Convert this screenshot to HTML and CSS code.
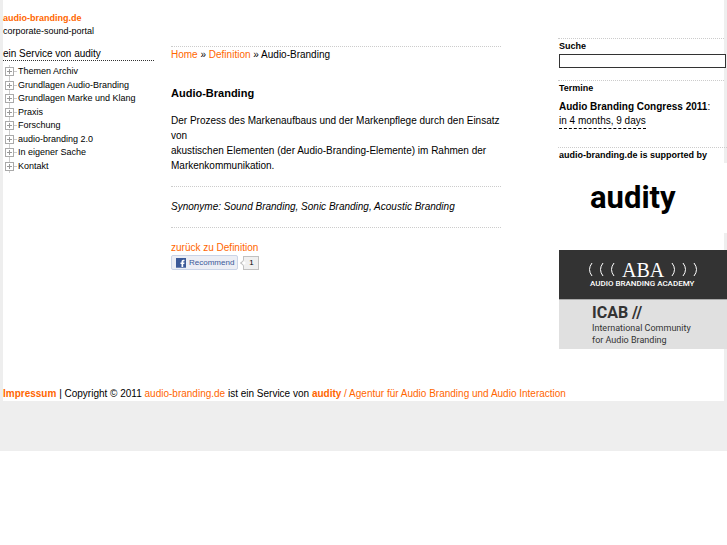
FILE: index.html
```html
<!DOCTYPE html>
<html lang="de">
<head>
<meta charset="UTF-8">
<meta name="viewport" content="width=device-width, initial-scale=1.0">
<title>Audio-Branding - audio-branding.de</title>
<link rel="stylesheet" href="styles.css">
</head>
<body>
<div class="wrapper">
  <div class="page">
    <div class="columns">

      <div class="left">
        <a class="logo" href="#">audio-branding.de</a>
        <div class="claim">corporate-sound-portal</div>
        <div class="service">ein Service von audity</div>
        <ul class="tree">
          <li><a href="#">Themen Archiv</a></li>
          <li><a href="#">Grundlagen Audio-Branding</a></li>
          <li><a href="#">Grundlagen Marke und Klang</a></li>
          <li><a href="#">Praxis</a></li>
          <li><a href="#">Forschung</a></li>
          <li><a href="#">audio-branding 2.0</a></li>
          <li><a href="#">In eigener Sache</a></li>
          <li><a href="#">Kontakt</a></li>
        </ul>
      </div>

      <div class="content">
        <div class="breadcrumb"><a href="#">Home</a> » <a href="#">Definition</a> » Audio-Branding</div>
        <h1>Audio-Branding</h1>
        <p class="text">Der Prozess des Markenaufbaus und der Markenpflege durch den Einsatz von<br>akustischen Elementen (der Audio-Branding-Elemente) im Rahmen der Markenkommunikation.</p>
        <p class="synonyms">Synonyme: Sound Branding, Sonic Branding, Acoustic Branding</p>
        <a class="back" href="#">zurück zu Definition</a>
        <div class="like">
          <button type="button" class="recommend">
            <svg width="10" height="10" viewBox="0 0 10 10" aria-hidden="true">
              <rect width="10" height="10" fill="#3b5998"/>
              <path d="M5.5 9V6H4.5V4.500H5.500V3.500Q5.500 1.800 7.200 1.800H8.500V3.200H7.700Q7.200 3.200 7.200 3.700V4.500H8.500L8.300 6H7.200V9Z" fill="#fff"/>
              <path d="M0 9.500H10" stroke="#6d84b4"/>
            </svg>
            Recommend
          </button>
          <span class="count">1</span>
        </div>
      </div>

      <div class="right">
        <form class="box search">
          <label for="search">Suche</label>
          <input type="text" id="search">
        </form>
        <div class="box dates">
          <h2>Termine</h2>
          <div><b>Audio Branding Congress 2011</b>:</div>
          <abbr>in 4 months, 9 days</abbr>
        </div>
        <div class="box support">
          <h2>audio-branding.de is supported by</h2>
          <a class="audity" href="#">audity</a>
          <a class="aba" href="#">
            <span class="aba-name">
              <svg width="28" height="18" viewBox="0 0 28 18" aria-hidden="true">
                <path d="M4 2Q-1 8.500 4 15M15 2Q10 8.500 15 15M26 2Q21 8.500 26 15"/>
              </svg>
              ABA
              <svg width="28" height="18" viewBox="0 0 28 18" aria-hidden="true">
                <path d="M2 2Q7 8.500 2 15M13 2Q18 8.500 13 15M24 2Q29 8.500 24 15"/>
              </svg>
            </span>
            <span class="aba-sub">AUDIO BRANDING ACADEMY</span>
          </a>
          <a class="icab" href="#">
            <b>ICAB //</b>
            <span>International Community<br>for Audio Branding</span>
          </a>
        </div>
      </div>

    </div>
    <div class="footer">
      <a href="#"><b>Impressum</b></a> | Copyright © 2011 <a href="#">audio-branding.de</a> ist ein Service von <a href="#"><b>audity</b> / Agentur für Audio Branding und Audio Interaction</a>
    </div>
  </div>
</div>
</body>
</html>
```
FILE: styles.css
```css
body {
  margin: 0;
  background: #fff;
  color: #000;
  font-family: "Liberation Sans", Arial, Helvetica, sans-serif;
  font-size: 10px;
  line-height: 15px;
}
a {
  color: #ff6600;
  text-decoration: none;
}
h1, h2, p, ul {
  margin: 0;
  padding: 0;
}
.wrapper {
  background: #eee;
  padding: 0 3px 50px;
}
.page {
  background: #fff;
}
.columns {
  display: grid;
  grid-template-columns: 151px 1fr 166px;
}

/* left column */
.left {
  padding-top: 12px;
  font-size: 9px;
  line-height: 13px;
}
.logo {
  display: block;
  font-weight: bold;
}
.service {
  margin-top: 9px;
  border-bottom: 1px dotted #333;
  font-size: 10px;
}
.tree {
  display: grid;
  grid-auto-rows: 1fr;
  height: 108px;
  margin-top: 4px;
  list-style: none;
}
.tree li {
  padding-left: 15px;
  background:
    linear-gradient(#999, #999) 4px 6px / 5px 1px no-repeat,
    linear-gradient(#999, #999) 6px 4px / 1px 5px no-repeat,
    linear-gradient(#fff, #fff) 3px 3px / 7px 7px no-repeat,
    linear-gradient(#aaa, #aaa) 2px 2px / 9px 9px no-repeat,
    linear-gradient(#ccc, #ccc) 11px 6px / 3px 1px no-repeat,
    linear-gradient(#ccc, #ccc) 6px 0 / 1px 100% no-repeat;
}
.tree a {
  color: #000;
}

/* content */
.content {
  padding: 46px 57px 0 17px;
}
.breadcrumb {
  border-top: 1px dotted #ccc;
}
h1 {
  margin-top: 24px;
  font-size: 11px;
  line-height: 15px;
}
.text {
  margin-top: 12px;
  padding-bottom: 13px;
  border-bottom: 1px dotted #ccc;
}
.synonyms {
  padding: 12px 0 13px;
  border-bottom: 1px dotted #ccc;
  font-style: italic;
}
.back {
  display: block;
  margin-top: 12px;
}
.like {
  display: flex;
  align-items: center;
  gap: 5px;
}
.recommend {
  display: flex;
  align-items: center;
  gap: 3px;
  height: 15px;
  padding: 0 3px 0 4px;
  border: 1px solid #cad4e7;
  border-radius: 2px;
  background: #eceef5;
  color: #3b5998;
  font: 8px "Liberation Sans", Arial, sans-serif;
}
.count {
  position: relative;
  box-sizing: border-box;
  width: 16px;
  height: 14px;
  border: 1px solid #c1c1c1;
  background: #f0f0f0;
  font-size: 8px;
  line-height: 12px;
  text-align: center;
}
.count::before {
  content: "";
  position: absolute;
  left: -3px;
  top: 4px;
  width: 3px;
  height: 3px;
  border: solid #c1c1c1;
  border-width: 0 0 1px 1px;
  background: #fff;
  transform: rotate(45deg);
}

/* right column */
.right {
  padding-top: 38px;
}
.box {
  padding-left: 1px;
  border-top: 1px dotted #ccc;
}
.box h2, .box label {
  display: block;
  font-size: 9px;
  font-weight: bold;
  line-height: 15px;
}
.search input {
  display: block;
  box-sizing: border-box;
  width: 167px;
  height: 14px;
  padding: 0 2px;
  border: 1px solid #333;
  background: #fff;
  font-size: 10px;
}
.dates {
  margin-top: 12px;
  line-height: 14px;
}
.dates div {
  margin-top: 4px;
}
.dates abbr {
  display: inline-block;
  border-bottom: 1px dashed #000;
}
.support {
  margin: 18px -3px 0 0;
}
.support a {
  display: block;
}
.audity {
  height: 70px;
  padding-left: 31px;
  background: #fff;
  color: #000;
  font: bold 31px/70px Roboto, sans-serif;
}
.aba {
  height: 49px;
  margin-top: 17px;
  border-bottom: 1px solid #aaa;
  background: #333;
  color: #fff;
}
.aba-name {
  display: flex;
  align-items: center;
  gap: 6px;
  padding: 10px 0 0 29px;
  font: 20px/20px "Liberation Serif", serif;
}
.aba-name path {
  fill: none;
  stroke: #fff;
}
.aba-sub {
  display: block;
  padding-left: 31px;
  font: 500 8px/8px Roboto, sans-serif;
}
.icab {
  padding: 4px 0 3px 33px;
  background: #e0e0e0;
  color: #333;
  font: 9px/12px Roboto, sans-serif;
}
.icab b {
  display: block;
  font-size: 16px;
  line-height: 18px;
}
.icab span {
  display: block;
}

.footer {
  margin-top: 37px;
}
```
